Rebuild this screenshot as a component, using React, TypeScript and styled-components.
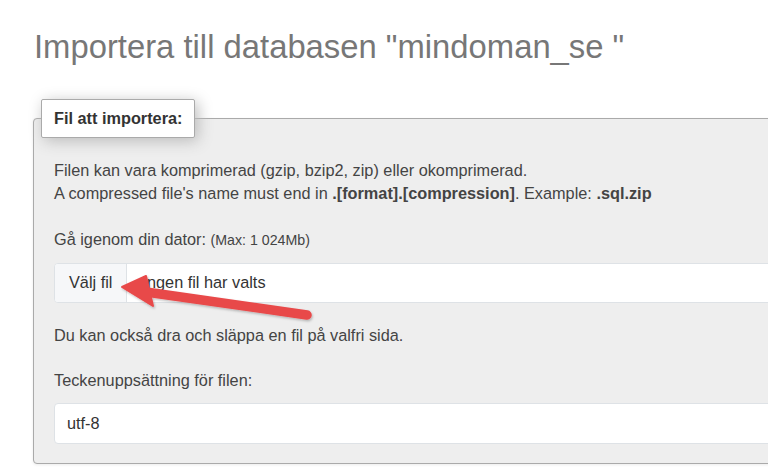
import React from 'react';
import styled, { createGlobalStyle } from 'styled-components';

const Global = createGlobalStyle`
  html, body { margin: 0; padding: 0; background: #fff; overflow: hidden; }
  body { font-family: "Liberation Sans", Arial, Helvetica, sans-serif; color: #444; }
  #root { width: 768px; height: 474px; }
`;

const Page = styled.div`
  position: relative;
  width: 768px;
  height: 474px;
  overflow: hidden;
  padding: 27px 0 0 33px;
  box-sizing: border-box;
`;

const Title = styled.h2`
  margin: 0 0 33px 1px;
  font-size: 32.8px;
  line-height: 39.2px;
  font-weight: normal;
  color: #777;
  white-space: nowrap;
`;

const Fieldset = styled.fieldset`
  margin: 0;
  width: 1000px;
  min-width: 0;
  box-sizing: border-box;
  border: 1px solid #aaa;
  border-radius: 4px;
  background: #eee;
  padding: 21px 0 19.5px 7px;
  box-shadow: 0 1px 3px rgba(0, 0, 0, 0.08);
`;

const Legend = styled.legend`
  padding: 7px 12px;
  border: 1px solid #aaa;
  border-radius: 2px;
  background: #fff;
  box-shadow: 3px 3px 15px #bbb;
  font-weight: bold;
  font-size: 16.3px;
  line-height: 22.7px;
  color: #333;
  white-space: nowrap;
`;

const Body = styled.div`
  padding-left: 13px;
  font-size: 16.3px;
  line-height: 22.7px;
  color: #444;
`;

const Para = styled.p<{ $mb: number }>`
  margin: 0 0 ${(p) => p.$mb}px;
  white-space: nowrap;
`;

const Label = styled.div`
  margin-bottom: 11px;
  white-space: nowrap;
`;

const Small = styled.small`
  font-size: 14.2px;
`;

const InputGroup = styled.div<{ $mb: number }>`
  display: flex;
  height: 40px;
  box-sizing: border-box;
  border: 1px solid #dee2e6;
  border-radius: 4px;
  background: #fff;
  overflow: hidden;
  margin-bottom: ${(p) => p.$mb}px;
`;

const FileButton = styled.div`
  display: flex;
  align-items: center;
  padding: 0 14px;
  background: #f6f7f9;
  border-right: 1px solid #dee2e6;
  color: #333;
`;

const FileName = styled.div`
  display: flex;
  align-items: center;
  padding-left: 15px;
  color: #333;
`;

const SelectBox = styled.div`
  display: flex;
  align-items: center;
  height: 41px;
  box-sizing: border-box;
  padding: 0 12px;
  border: 1px solid #dee2e6;
  border-radius: 4px;
  background: #fff;
  color: #333;
`;

const Overlay = styled.svg`
  position: absolute;
  left: 0;
  top: 0;
  pointer-events: none;
`;

export default function App() {
  return (
    <>
      <Global />
      <Page>
        <Title>Importera till databasen "mindoman_se "</Title>
        <Fieldset>
          <Legend>Fil att importera:</Legend>
          <Body>
            <Para $mb={23.5}>
              Filen kan vara komprimerad (gzip, bzip2, zip) eller okomprimerad.
              <br />
              A compressed file's name must end in <b>.[format].[compression]</b>. Example:{' '}
              <b>.sql.zip</b>
            </Para>
            <Label>
              Gå igenom din dator: <Small>(Max: 1 024Mb)</Small>
            </Label>
            <InputGroup $mb={21.4}>
              <FileButton>Välj fil</FileButton>
              <FileName>Ingen fil har valts</FileName>
            </InputGroup>
            <Para $mb={22.6}>Du kan också dra och släppa en fil på valfri sida.</Para>
            <Label>Teckenuppsättning för filen:</Label>
            <SelectBox>utf-8</SelectBox>
          </Body>
        </Fieldset>
        <Overlay width="768" height="474" viewBox="0 0 768 474">
          <defs>
            <filter id="arrowShadow" x="-10%" y="-50%" width="120%" height="200%">
              <feDropShadow dx="1" dy="1.5" stdDeviation="1.2" floodColor="#000" floodOpacity="0.25" />
            </filter>
          </defs>
          <g filter="url(#arrowShadow)" fill="#e8494a" stroke="#e8494a">
            <line x1="146" y1="292" x2="307" y2="315" strokeWidth="9.5" strokeLinecap="round" />
            <polygon points="122,287 146,276 153,306" strokeWidth="2" strokeLinejoin="round" />
          </g>
        </Overlay>
      </Page>
    </>
  );
}
